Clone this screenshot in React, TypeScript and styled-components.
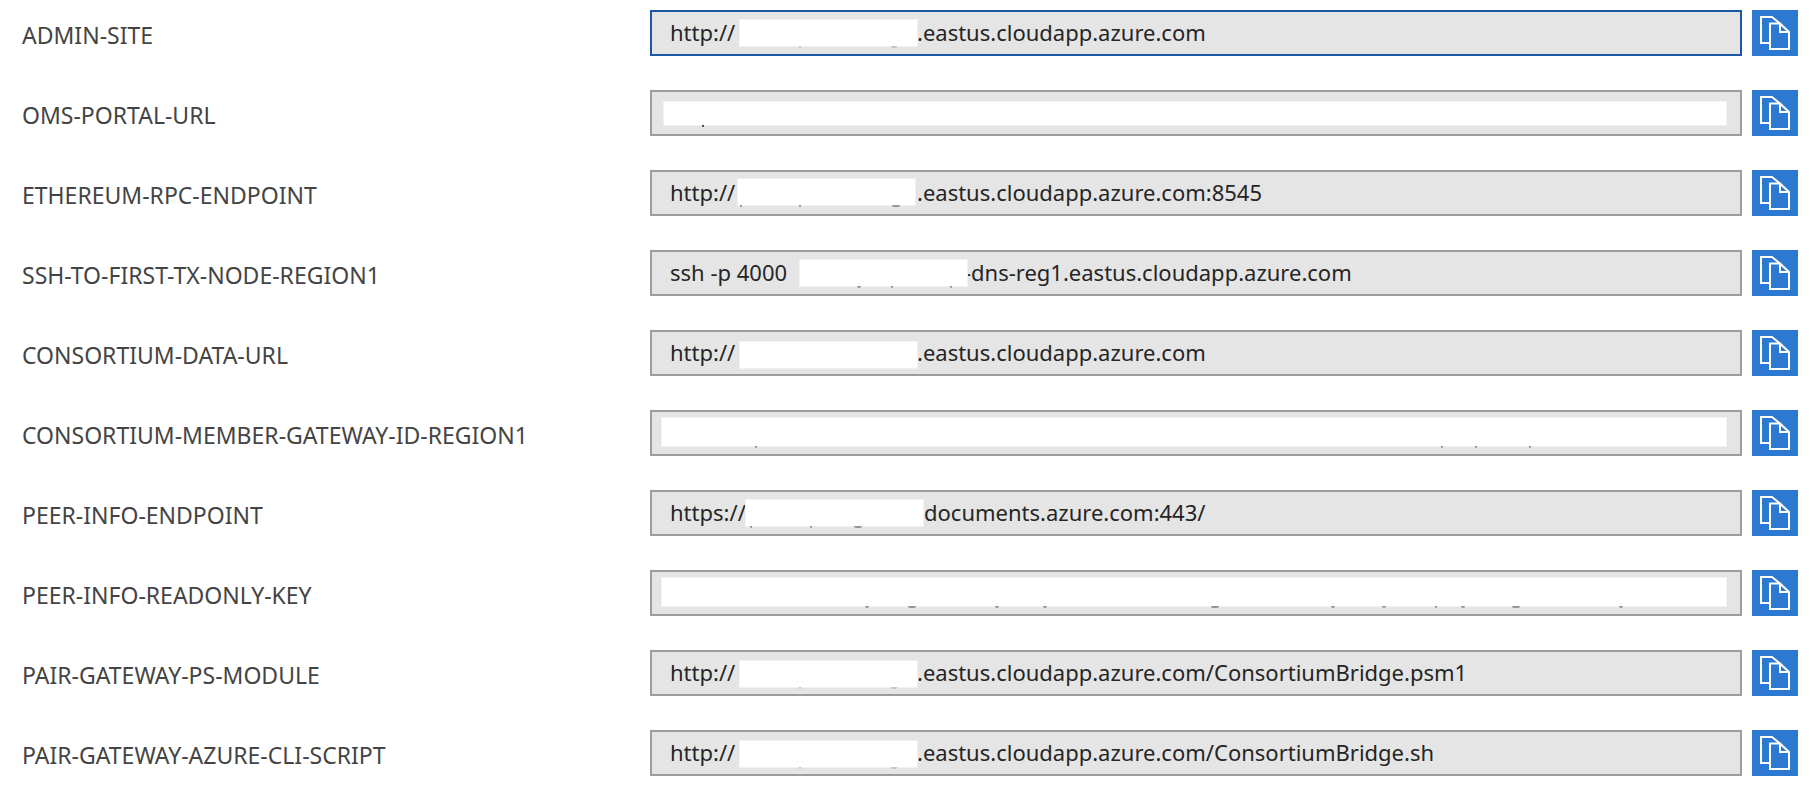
import React from "react";
import styled, { createGlobalStyle } from "styled-components";

const GlobalStyle = createGlobalStyle`
  * { box-sizing: border-box; }
  body {
    margin: 0;
    background: #ffffff;
    font-family: "Segoe UI", "Noto Sans", "Open Sans", sans-serif;
  }
`;

const OutputList = styled.main`
  display: flex;
  flex-direction: column;
  gap: 34px;
  padding: 10px 22px 26px;
`;

const OutputRow = styled.div`
  display: grid;
  grid-template-columns: minmax(0, 157fr) minmax(0, 273fr) 56px;
  align-items: center;
`;

const Label = styled.label`
  padding-top: 4px;
  color: #444444;
  font-size: 23px;
  line-height: 32px;
  white-space: nowrap;
`;

const Field = styled.div`
  position: relative;
  height: 46px;
`;

const ValueInput = styled.input<{ $active?: boolean }>`
  display: block;
  width: 100%;
  height: 46px;
  padding: 0 18px 2px;
  border: 2px solid ${(p) => (p.$active ? "#1b59a5" : "#9d9d9d")};
  border-radius: 0;
  outline: none;
  background: #e5e5e5;
  color: #252525;
  font-family: inherit;
  font-size: 22px;
`;

const Redaction = styled.span<{ $left: number; $top: number; $height: number; $width?: number }>`
  position: absolute;
  left: ${(p) => p.$left}px;
  top: ${(p) => p.$top}px;
  height: ${(p) => p.$height}px;
  ${(p) => (p.$width ? `width: ${p.$width}px;` : "right: 15px;")}
  border: 1px solid #f2f2f2;
  background: #ffffff;
  background-clip: padding-box;
  pointer-events: none;
`;

const Speck = styled.i<{ $left: number; $width: number; $tone: string }>`
  position: absolute;
  left: ${(p) => p.$left}px;
  bottom: -2px;
  width: ${(p) => p.$width}px;
  height: 2px;
  border-radius: 0 0 2px 2px;
  background: ${(p) => p.$tone};
`;

const CopyButton = styled.button`
  display: flex;
  justify-self: end;
  width: 46px;
  height: 46px;
  padding: 0;
  border: 0;
  background: #2b79d0;
  cursor: pointer;
`;

const CopyIcon = () => (
  <svg width="46" height="46" viewBox="0 0 46 46" fill="none" stroke="#ffffff" strokeWidth="2" aria-hidden="true">
    <path d="M17 33H9V7H20L28.5 14" />
    <path d="M18 13.5H28L37 22V39H18Z" />
    <path d="M28 14V22H37" />
  </svg>
);

type Cover = {
  left: number;
  top: number;
  height: number;
  width?: number;
  tone?: string;
  specks?: [number, number][];
};

type Output = { name: string; value: string; cover: Cover; active?: boolean };

// Blank run that stands where the hidden part of a value was.
const blank = (ems: number, spaces: number) => "\u2003".repeat(ems) + "\u00a0".repeat(spaces);

const host = "http://" + blank(8, 1) + ".eastus.cloudapp.azure.com";
const faint: Pick<Cover, "tone" | "specks"> = { tone: "#c4c4c4", specks: [[59, 2], [151, 6]] };

const outputs: Output[] = [
  { name: "ADMIN-SITE", value: host, active: true, cover: { left: 89, top: 9, height: 28, width: 179, ...faint } },
  { name: "OMS-PORTAL-URL", value: "", cover: { left: 13, top: 11, height: 25, tone: "#333333", specks: [[38, 2]] } },
  {
    name: "ETHEREUM-RPC-ENDPOINT",
    value: host + ":8545",
    cover: { left: 87, top: 8, height: 28, width: 179, specks: [[2, 2], [61, 2], [154, 8]] },
  },
  {
    name: "SSH-TO-FIRST-TX-NODE-REGION1",
    value: "ssh -p 4000 " + blank(7, 3) + "-dns-reg1.eastus.cloudapp.azure.com",
    cover: { left: 149, top: 9, height: 28, width: 169, specks: [[57, 4], [91, 2], [150, 2]] },
  },
  { name: "CONSORTIUM-DATA-URL", value: host, cover: { left: 89, top: 11, height: 28, width: 179 } },
  {
    name: "CONSORTIUM-MEMBER-GATEWAY-ID-REGION1",
    value: "",
    cover: { left: 11, top: 7, height: 30, specks: [[93, 2], [779, 2], [813, 2], [867, 2]] },
  },
  {
    name: "PEER-INFO-ENDPOINT",
    value: "https://" + blank(8, 0) + "\u200adocuments.azure.com:443/",
    cover: { left: 95, top: 9, height: 28, width: 179, specks: [[4, 2], [64, 2], [108, 8]] },
  },
  {
    name: "PEER-INFO-READONLY-KEY",
    value: "",
    cover: {
      left: 11,
      top: 7,
      height: 30,
      specks: [[203, 4], [246, 8], [333, 4], [381, 4], [549, 8], [669, 4], [720, 4], [773, 2], [799, 4], [850, 8], [957, 4]],
    },
  },
  {
    name: "PAIR-GATEWAY-PS-MODULE",
    value: host + "/ConsortiumBridge.psm1",
    cover: { left: 89, top: 10, height: 28, width: 179, ...faint },
  },
  {
    name: "PAIR-GATEWAY-AZURE-CLI-SCRIPT",
    value: host + "/ConsortiumBridge.sh",
    cover: { left: 89, top: 10, height: 28, width: 179, ...faint },
  },
];

export default function App() {
  return (
    <>
      <GlobalStyle />
      <OutputList>
        {outputs.map(({ name, value, cover, active }) => (
          <OutputRow key={name}>
            <Label htmlFor={name}>{name}</Label>
            <Field>
              <ValueInput id={name} type="text" readOnly value={value} $active={active} />
              <Redaction $left={cover.left} $top={cover.top} $height={cover.height} $width={cover.width}>
                {cover.specks?.map(([left, width]) => (
                  <Speck key={left} $left={left} $width={width} $tone={cover.tone ?? "#959595"} />
                ))}
              </Redaction>
            </Field>
            <CopyButton type="button" aria-label={`Copy ${name}`}>
              <CopyIcon />
            </CopyButton>
          </OutputRow>
        ))}
      </OutputList>
    </>
  );
}
